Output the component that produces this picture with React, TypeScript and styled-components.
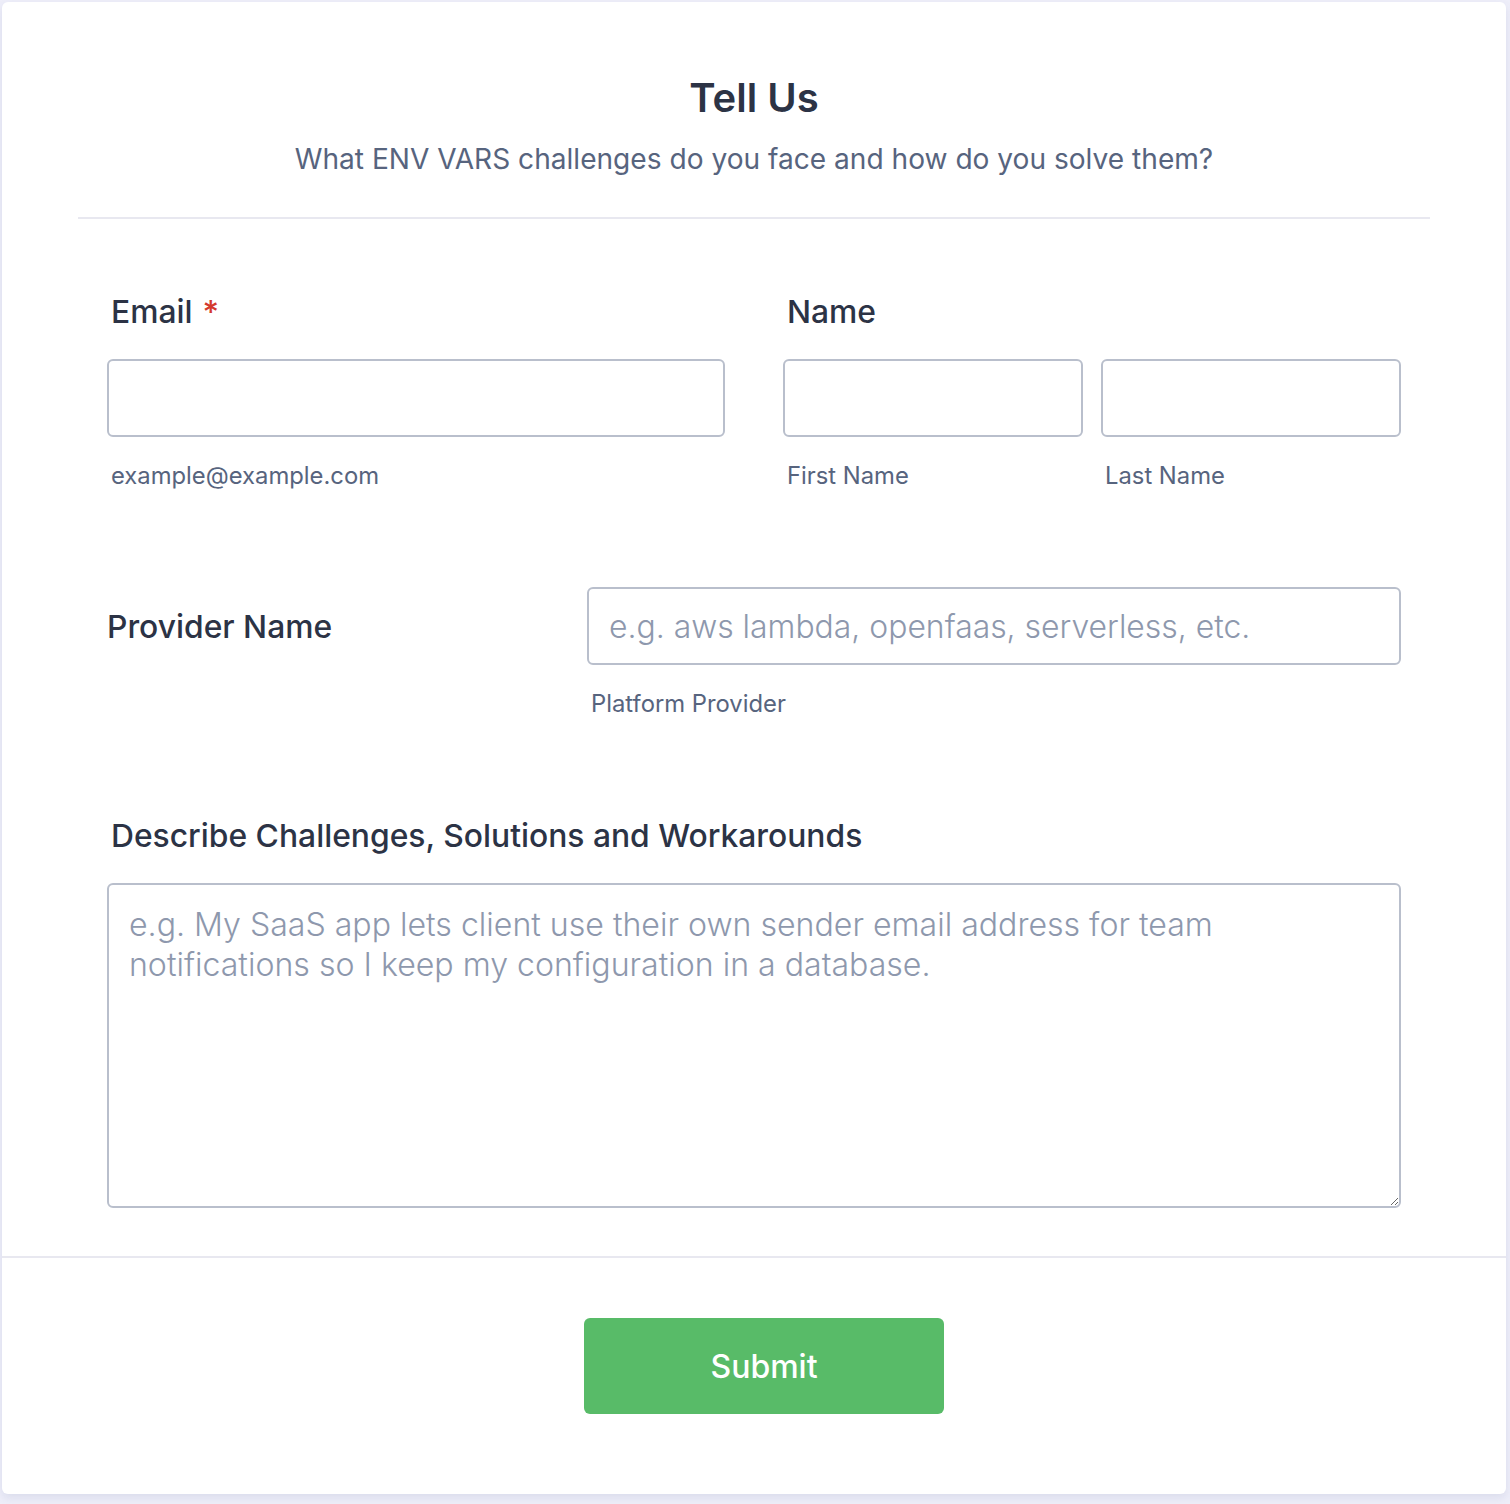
import React from 'react'
import styled, { createGlobalStyle } from 'styled-components'

const GlobalStyle = createGlobalStyle`
  html, body {
    margin: 0;
    padding: 0;
    background: #eeeef9;
  }
  body {
    font-family: Inter, "Noto Sans", "Liberation Sans", sans-serif;
    color: #2c3345;
  }
  * { box-sizing: border-box; }
`;

const Page = styled.div`
  padding: 2px 4px 10px 2px;
  min-height: 1504px;
`;

const Card = styled.form`
  background: #ffffff;
  border-radius: 6px;
  box-shadow: 0 4px 8px rgba(84, 95, 145, 0.12);
  height: 1492px;
  display: flex;
  flex-direction: column;
`;

const Header = styled.header`
  text-align: center;
  padding: 72px 0 40px;
  margin: 0 76px;
  border-bottom: 2px solid #e8e8f0;
`;

const Title = styled.h1`
  margin: 0;
  font-size: 40px;
  line-height: 48px;
  font-weight: 600;
  color: #2c3345;
`;

const Subtitle = styled.p`
  margin: 19px 0 0;
  font-size: 28.1px;
  line-height: 36px;
  color: #57647e;
`;

const Body = styled.div`
  padding: 73px 105px 0;
  flex: 1;
`;

const TwoCols = styled.div`
  display: grid;
  grid-template-columns: 1fr 1fr;
  column-gap: 58px;
`;

const Field = styled.div`
  display: flex;
  flex-direction: column;
`;

const Label = styled.label<{ $inset?: boolean }>`
  font-size: 31.8px;
  line-height: 40px;
  font-weight: 500;
  color: #2c3345;
  padding-left: ${p => (p.$inset ? '4px' : '0')};
  margin-bottom: 27px;
`;

const Star = styled.span`
  color: #d4392e;
  margin-left: 10px;
`;

const Input = styled.input`
  width: 100%;
  height: 78px;
  border: 2px solid #b9bfcc;
  border-radius: 6px;
  padding: 0 20px;
  font-family: inherit;
  font-size: 31.9px;
  font-weight: 300;
  color: #2c3345;
  background: #fff;
  outline: none;
  &::placeholder { color: #8e98ad; }
`;

const Hint = styled.span`
  display: block;
  margin-top: 23px;
  padding-left: 4px;
  font-size: 23.8px;
  line-height: 32px;
  color: #57647e;
`;

const NameInputs = styled.div`
  display: grid;
  grid-template-columns: 1fr 1fr;
  column-gap: 18px;
`;

const ProviderRow = styled.div`
  display: grid;
  grid-template-columns: 480px 1fr;
  margin-top: 95px;
`;

const ProviderLabel = styled.label`
  height: 78px;
  display: flex;
  align-items: center;
  font-size: 31.8px;
  font-weight: 500;
  color: #2c3345;
`;

const DescribeField = styled(Field)`
  margin-top: 96px;
`;

const TextArea = styled.textarea`
  width: 100%;
  height: 325px;
  border: 2px solid #b9bfcc;
  border-radius: 6px;
  padding: 20px 20px;
  font-family: inherit;
  font-size: 32.1px;
  font-weight: 300;
  line-height: 40px;
  color: #2c3345;
  resize: vertical;
  outline: none;
  &::placeholder { color: #8e98ad; }
`;

const Footer = styled.div`
  border-top: 2px solid #e8e8f0;
  display: flex;
  justify-content: center;
  padding: 60px 0 80px 20px;
`;

const SubmitButton = styled.button`
  width: 360px;
  height: 96px;
  border: none;
  border-radius: 6px;
  background: #58bb68;
  color: #ffffff;
  font-family: inherit;
  font-size: 32px;
  font-weight: 500;
  cursor: pointer;
`;

const App = () => {
  return (
    <>
      <GlobalStyle />
      <Page>
        <Card onSubmit={e => e.preventDefault()}>
          <Header>
            <Title>Tell Us</Title>
            <Subtitle>What ENV VARS challenges do you face and how do you solve them?</Subtitle>
          </Header>
          <Body>
            <TwoCols>
              <Field>
                <Label $inset htmlFor="email">
                  Email<Star>*</Star>
                </Label>
                <Input id="email" type="email" />
                <Hint>example@example.com</Hint>
              </Field>
              <Field>
                <Label $inset>Name</Label>
                <NameInputs>
                  <div>
                    <Input aria-label="First Name" />
                    <Hint>First Name</Hint>
                  </div>
                  <div>
                    <Input aria-label="Last Name" />
                    <Hint>Last Name</Hint>
                  </div>
                </NameInputs>
              </Field>
            </TwoCols>

            <ProviderRow>
              <ProviderLabel htmlFor="provider">Provider Name</ProviderLabel>
              <div>
                <Input id="provider" placeholder="e.g. aws lambda, openfaas, serverless, etc." />
                <Hint>Platform Provider</Hint>
              </div>
            </ProviderRow>

            <DescribeField>
              <Label $inset htmlFor="describe">Describe Challenges, Solutions and Workarounds</Label>
              <TextArea
                id="describe"
                placeholder="e.g. My SaaS app lets client use their own sender email address for team notifications so I keep my configuration in a database."
              />
            </DescribeField>
          </Body>
          <Footer>
            <SubmitButton type="submit">Submit</SubmitButton>
          </Footer>
        </Card>
      </Page>
    </>
  )
}

export default App
